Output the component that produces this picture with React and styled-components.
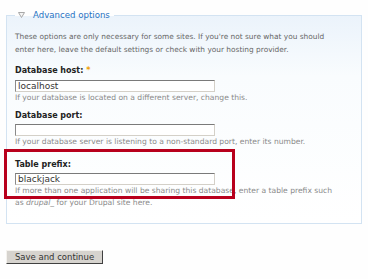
import React from 'react';
import styled, { createGlobalStyle } from 'styled-components';

const GlobalStyle = createGlobalStyle`
  html, body {
    margin: 0;
    padding: 0;
    background: #fefefe;
  }
  body {
    font-family: "DejaVu Sans", Verdana, sans-serif;
  }
`;

const Page = styled.div`
  width: 368px;
  height: 279px;
  padding: 9px 0 0 6px;
  box-sizing: border-box;
  overflow: hidden;
`;

const Fieldset = styled.fieldset`
  width: 356px;
  box-sizing: border-box;
  margin: 0;
  padding: 9px 8px 14px 8px;
  border: 1px solid #d3e3f2;
  background: linear-gradient(#ebf3fb, #f9fcfe 60px, #fff);
`;

const Legend = styled.legend`
  display: flex;
  align-items: center;
  padding: 0 4px 0 3px;
  height: 12px;
  font-size: 8.6px;
  line-height: 12px;
  color: #2773c3;
`;

const Toggle = styled.svg`
  width: 7px;
  height: 6px;
  margin-right: 8px;
`;

const Description = styled.p`
  margin: 0;
  font-size: 7.4px;
  line-height: 13px;
  color: #666;
`;

const Item = styled.div`
  position: relative;
  margin-top: ${p => p.$gap || 8}px;
`;

const Label = styled.div`
  font-size: 8px;
  font-weight: bold;
  line-height: 12px;
  color: #222;
`;

const Required = styled.span`
  color: #f0a000;
  margin-left: 3px;
`;

const Input = styled.div`
  width: 200px;
  height: 12px;
  box-sizing: border-box;
  margin-top: ${p => p.$gap || 2}px;
  padding: 0 2px;
  border: 1px solid #d4d0c8;
  border-top-color: #7a7a7a;
  border-left-color: #8a8a8a;
  background: #fff;
  font-size: 9px;
  line-height: 10px;
  color: #333;
`;

const Help = styled.div`
  font-size: 7.6px;
  line-height: 12px;
  color: #8a8a8a;
`;

const Highlight = styled.div`
  position: absolute;
  left: -11px;
  top: -10px;
  width: 231px;
  height: 50px;
  box-sizing: border-box;
  border: 3px solid #b8001c;
  pointer-events: none;
`;

const Button = styled.button`
  display: block;
  width: 97px;
  height: 14px;
  margin-top: 26px;
  padding: 0;
  box-sizing: border-box;
  border: 1px solid;
  border-color: #f4f2ee #404040 #404040 #f4f2ee;
  background: #d6d3ce;
  font-family: "DejaVu Sans", Verdana, sans-serif;
  font-size: 8.5px;
  line-height: 12px;
  color: #333;
`;

const App = () => {
  return (
    <Page>
      <GlobalStyle />
      <Fieldset>
        <Legend>
          <Toggle viewBox="0 0 7 6">
            <path d="M0.5 0.5 H6.5 L3.5 5.5 Z" fill="#f4f4f4" stroke="#a8a8a8" strokeWidth="1" />
          </Toggle>
          Advanced options
        </Legend>
        <Description>
          These options are only necessary for some sites. If you're not sure what you should
          <br />
          enter here, leave the default settings or check with your hosting provider.
        </Description>

        <Item $gap={9}>
          <Label>
            Database host:<Required>*</Required>
          </Label>
          <Input $gap={3}>localhost</Input>
          <Help>If your database is located on a different server, change this.</Help>
        </Item>

        <Item $gap={6}>
          <Label>Database port:</Label>
          <Input />
          <Help>If your database server is listening to a non-standard port, enter its number.</Help>
        </Item>

        <Item $gap={11}>
          <Label>Table prefix:</Label>
          <Input>blackjack</Input>
          <Help>
            If more than one application will be sharing this database, enter a table prefix such
            <br />
            as <em>drupal_</em> for your Drupal site here.
          </Help>
          <Highlight />
        </Item>
      </Fieldset>
      <Button>Save and continue</Button>
    </Page>
  );
};

export default App;
